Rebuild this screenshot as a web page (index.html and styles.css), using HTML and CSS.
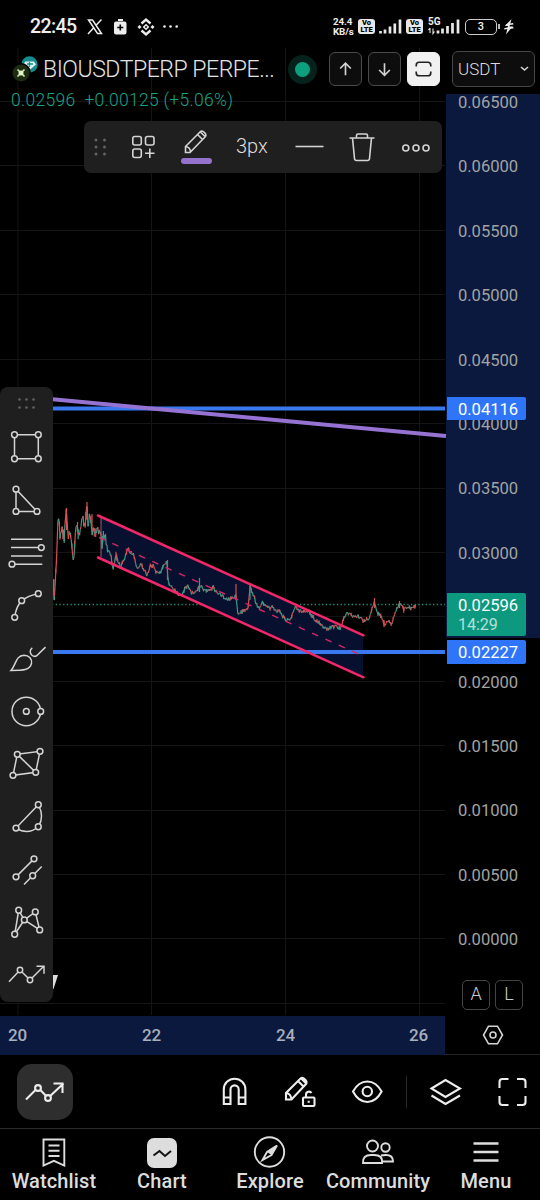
FILE: index.html
```html
<!DOCTYPE html>
<html lang="en">
<head>
<meta charset="utf-8">
<title>BIOUSDTPERP chart</title>
<link rel="stylesheet" href="styles.css">
</head>
<body>
<div class="phone">
  <header class="status">
    <span class="clock">22:45</span>
    <svg class="status-left" width="96" height="24" viewBox="85 15 96 24">
      <path class="s2" d="M88.5 20h4l9 13.500h-4zM101.500 19.500l-5.700 6M93.500 28l-5.500 6"/>
      <path class="solid" d="M118 19h5v2h-5zM116 21.500h8.500a2 2 0 0 1 2 2v9a2 2 0 0 1-2 2H116a2 2 0 0 1-2-2v-9a2 2 0 0 1 2-2z"/>
      <path class="cut" d="M120.300 24.500v6M117.300 27.500h6"/>
      <path class="s25" d="M141.500 23.500l4.500-4 4.500 4M141.500 30.500l4.500 4 4.500-4"/>
      <path class="solid" d="M146 23.700l3.300 3.300-3.300 3.300-3.300-3.300zM139.500 25l2 2-2 2-2-2zM152.500 25l2 2-2 2-2-2z"/>
      <path class="cut1" d="M146 25.800l1.200 1.200-1.200 1.200-1.200-1.200z"/>
      <circle class="solid" cx="164.500" cy="26.500" r="1.300"/><circle class="solid" cx="170.500" cy="26.500" r="1.300"/><circle class="solid" cx="176.700" cy="26.500" r="1.300"/>
    </svg>
    <div class="status-right">
      <span class="speed">24.4<br>KB/s</span>
      <span class="volte">Vo<br>LTE</span>
      <svg class="bars" width="23" height="16" viewBox="0 0 23 16"><path d="M1.500 12v2.500M6 10.500v4M11 7.500v7M15.800 4.500v10M21 .500v14"/></svg>
      <span class="volte">Vo<br>LTE</span>
      <div class="cell"><span class="g5">5G</span>
        <svg class="bars" width="32" height="16" viewBox="0 0 32 16"><path class="thin" d="M2 9v5M.500 11L2 9M5 9.500v5l1.500-2"/><path d="M10 11.500v3M14.500 9.500v5M19.500 7v7.500M24.500 4v10.500M30 .500v14"/></svg>
      </div>
      <span class="battery">3</span>
      <svg width="10" height="16" viewBox="0 0 10 16"><path class="solid" d="M7.500 0L1 7h3L2 15.500l6.500-8H5.500z"/><path class="solid" d="M0 10.500l9.500-1-.5-2L.5 9zM1 6.500l8.500-1-.5-1.500-6.500 1z"/></svg>
    </div>
  </header>

  <main class="workspace">
    <svg class="plot" width="446" height="967" viewBox="0 48 446 967">
      <g id="grid" class="grid"></g>
      <path class="last-price" d="M52 604.500H445"/>
      <path class="zone" d="M101 517L363 635V677L101 559z"/>
      <g id="candles" class="candles"></g>
      <path class="level" d="M50 408.500H445M50 652H445"/>
      <path class="trend" d="M50 399L446 436"/>
      <path class="channel" d="M98 515.500L363.500 635.300M98 557.500L363.500 677.300"/>
      <path class="median" d="M99 537.500L363 656"/>
      <path class="channel-edge" d="M101 518V557"/>
      <path class="mark" d="M52 975h6l-4.500 14H52z"/>
    </svg>

    <aside class="scale">
      <div class="range"></div>
      <ol class="prices">
        <li>0.06500</li><li>0.06000</li><li>0.05500</li><li>0.05000</li><li>0.04500</li><li>0.04000</li><li>0.03500</li>
        <li>0.03000</li><li></li><li>0.02000</li><li>0.01500</li><li>0.01000</li><li>0.00500</li><li>0.00000</li>
      </ol>
      <span class="tag tag-upper">0.04116</span>
      <span class="tag tag-last">0.02596<small>14:29</small></span>
      <span class="tag tag-lower">0.02227</span>
      <div class="modes"><button>A</button><button>L</button></div>
    </aside>

    <div class="dates"><span>20</span><span>22</span><span>24</span><span>26</span></div>
    <div class="axis-settings">
      <svg width="22" height="20" viewBox="0 0 22 20"><path d="M6.500 1.200h9l5 8.800-5 8.800h-9L1.500 10z"/><circle cx="11" cy="10" r="3"/></svg>
    </div>

    <section class="symbol">
      <div class="headline">
        <svg class="coins" width="27" height="26" viewBox="12 56 27 26">
          <circle cx="29.500" cy="65.500" r="8.200" fill="#148c90"/><path d="M25 62.500h9l2 3-6.500 5.500-6-5z" fill="#e0f2f0"/><path d="M27 65h6M29.500 63v5" stroke="#148c90" stroke-width="1.300"/>
          <circle cx="21" cy="74" r="10" fill="#000"/><circle cx="21" cy="74" r="8.500" fill="#1d2b12"/>
          <path d="M17.500 70.500l7 7M24.500 70.500l-7 7" stroke="#d6edb2" stroke-width="1.600"/><circle cx="21" cy="74" r="2.500" fill="#e3f5c4"/>
        </svg>
        <h1>BIOUSDTPERP PERPE...</h1>
        <i class="live"></i>
        <button class="key"><svg width="32" height="32" viewBox="0 0 32 32"><path d="M16 22.500V10M10.500 15.500L16 10l5.500 5.500"/></svg></button>
        <button class="key"><svg width="32" height="32" viewBox="0 0 32 32"><path d="M16 10v12.500M10.500 17L16 22.500l5.500-5.500"/></svg></button>
        <button class="key key-on"><svg width="32" height="32" viewBox="0 0 32 32"><path d="M8.500 13.500V12a3 3 0 0 1 3-3h9a3 3 0 0 1 3 3v1.500M8.500 18.500V20a3 3 0 0 0 3 3h9a3 3 0 0 0 3-3v-1.500"/></svg></button>
        <button class="currency">USDT<svg width="9" height="6" viewBox="0 0 9 6"><path d="M1 1l3.500 3L8 1"/></svg></button>
      </div>
      <p class="quote"><span>0.02596</span><span>+0.00125 (+5.06%)</span></p>
    </section>

    <div class="float-tools">
      <svg width="358" height="52" viewBox="84 120 358 52">
        <g class="dots"><circle cx="96" cy="139" r="1.500"/><circle cx="104.500" cy="139" r="1.500"/><circle cx="96" cy="146" r="1.500"/><circle cx="104.500" cy="146" r="1.500"/><circle cx="96" cy="153" r="1.500"/><circle cx="104.500" cy="153" r="1.500"/></g>
        <rect x="132.800" y="135.500" width="8.500" height="8.500" rx="2"/><rect x="145.500" y="135.500" width="8.500" height="8.500" rx="2"/><rect x="132.800" y="148" width="8.500" height="8.500" rx="2"/><path d="M149.800 147.500v9.500M145 152.300h9.500"/>
        <path d="M185.500 151.500v-6L200 131q2-2 4.500.5t.5 4.500l-15 15.500zM185.500 145.500q5 .5 5 6M197.500 133.500l5.300 5.300M200.200 130.800l5 5"/>
        <rect class="swatch" x="181" y="157" width="31" height="6" rx="3"/>
        <path d="M295.500 145.500h28"/>
        <path d="M349.500 137h25M356.500 137v-2.500q0-1.500 1.500-1.500h8q1.500 0 1.500 1.500v2.500M352.500 137l2 20.500q.2 2 2 2h11q1.800 0 2-2l2-20.500"/>
        <circle cx="405.800" cy="147" r="3"/><circle cx="416" cy="147" r="3"/><circle cx="426" cy="147" r="3"/>
      </svg>
      <span class="width-label">3px</span>
    </div>

    <nav class="drawing">
      <svg class="grip" width="52" height="33" viewBox="0 0 52 33"><circle cx="19.500" cy="12.500" r="1.300"/><circle cx="26.500" cy="12.500" r="1.300"/><circle cx="33.500" cy="12.500" r="1.300"/><circle cx="19.500" cy="20.500" r="1.300"/><circle cx="26.500" cy="20.500" r="1.300"/><circle cx="33.500" cy="20.500" r="1.300"/></svg>
      <svg viewBox="0 0 52 52"><path d="M14.500 14.300h23.800v24H14.500z"/><circle cx="14.500" cy="14.300" r="2.900"/><circle cx="38.300" cy="14.300" r="2.900"/><circle cx="14.500" cy="38.300" r="2.900"/><circle cx="38.300" cy="38.300" r="2.900"/></svg>
      <svg viewBox="0 0 52 52"><path d="M16 15.700V38h21z"/><circle cx="16" cy="15.700" r="2.900"/><circle cx="16" cy="38" r="2.900"/><circle cx="37" cy="38" r="2.900"/></svg>
      <svg viewBox="0 0 52 52"><path d="M11 12.800h31.300M11 21.100h30M11 29.500h31.300M12 37.700h30.300"/><circle cx="41.300" cy="21.100" r="2.900"/><circle cx="12" cy="37.700" r="2.900"/></svg>
      <svg viewBox="0 0 52 52"><path d="M14.700 37.900Q16 27 21.700 21.200 28 16 38.300 14.200"/><circle cx="14.700" cy="37.900" r="2.900"/><circle cx="21.700" cy="21.200" r="2.900"/><circle cx="38.300" cy="14.200" r="2.900"/></svg>
      <svg viewBox="0 0 52 52"><path d="M11 38C16 33 15.500 23 24 22.700c5 0 8.500 4.300 7.500 8.300C30 38 23 38 11 38zM32.300 15.300c-3 2-2.500 5.500-.3 7.500 2.500 2 4.500 1 6-.8l7.500-7.300"/></svg>
      <svg viewBox="0 0 52 52"><circle cx="26.300" cy="26" r="14.300"/><circle cx="26.300" cy="26" r="2.900"/><circle cx="40.700" cy="26" r="2.900"/></svg>
      <svg viewBox="0 0 52 52"><path d="M17.300 16.900L40 13.900l-4.300 21-22.700 3zl18.400 18"/><circle cx="17.300" cy="16.900" r="2.900"/><circle cx="40" cy="13.900" r="2.900"/><circle cx="35.700" cy="34.900" r="2.900"/><circle cx="13" cy="37.900" r="2.900"/></svg>
      <svg viewBox="0 0 52 52"><path d="M38.300 14.300L16 37.600q12 7.500 22.300-1.300 6.500-10 0-22z"/><circle cx="38.300" cy="14.300" r="2.900"/><circle cx="16" cy="37.600" r="2.900"/><circle cx="38.300" cy="36.300" r="2.900"/></svg>
      <svg viewBox="0 0 52 52"><path d="M16 33.400l18-18M24 41.100l17.700-18"/><circle cx="16" cy="33.400" r="2.900"/><circle cx="34" cy="15.400" r="2.900"/><circle cx="32.700" cy="32.300" r="2.900"/></svg>
      <svg viewBox="0 0 52 52"><path d="M14.700 37.800L18.700 13.800 24.300 23.500zM24.300 23.500L35.300 15.500 39.700 33.500z"/><circle cx="14.700" cy="37.800" r="2.900"/><circle cx="18.700" cy="13.800" r="2.900"/><circle cx="24.300" cy="23.500" r="2.900"/><circle cx="35.300" cy="15.500" r="2.900"/><circle cx="39.700" cy="33.500" r="2.900"/></svg>
      <svg viewBox="0 0 52 52"><path d="M9 32.300l11-11.700 10 10 14-14M36.500 16.800H44v7.500"/><circle cx="20" cy="20.600" r="2.700"/><circle cx="30" cy="30.600" r="2.700"/></svg>
    </nav>
  </main>

  <div class="toolbar">
    <button class="tool-active"><svg width="56" height="56" viewBox="17 1064 56 56"><path d="M26 1099.500l12-12 10 10.500 15.500-14.500M53.500 1083.500h9v9.500"/><circle cx="38" cy="1088" r="2.900"/><circle cx="48" cy="1098" r="2.900"/></svg></button>
    <svg class="magnet" width="26" height="30" viewBox="222 1077 26 30"><path d="M223.800 1104v-14.500a10.800 10.800 0 0 1 21.600 0V1104h-6.700v-14.500a4.100 4.100 0 0 0-8.200 0V1104zM223.800 1097.500h6.700M238.700 1097.500h6.700"/></svg>
    <svg class="pencil" width="32" height="32" viewBox="284 1076 32 32"><path d="M286 1099.500v-6.500l14.500-14.500q2-1.500 4.500 1t1 4.500L291.500 1099.500zM286 1093q5 .5 5.500 6.500M298 1081l5.500 5.500M301 1078.300l5 5"/><rect x="303" y="1097.500" width="11.500" height="8.500" rx="1"/><path d="M306 1097v-2.500a3 3 0 0 1 5.500-1.500M308.700 1100.700v2"/></svg>
    <svg class="eye" width="32" height="26" viewBox="351 1079 32 26"><path d="M353 1091.500q5.500-10 14.300-10t14.300 10q-5.500 10.500-14.300 10.500t-14.300-10.500z"/><circle cx="367.300" cy="1091.500" r="4.700"/></svg>
    <i class="rule"></i>
    <svg class="layers" width="32" height="30" viewBox="429 1077 32 30"><path d="M431.500 1088.500l14-8.500 14.500 8.500-14.500 8.500zM431.500 1095.500l14 8.500 14.500-8.500"/></svg>
    <svg class="expand" width="30" height="30" viewBox="497 1077 30 30"><path d="M499.500 1088v-6q0-3 3-3h6M517 1079h5.500q3 0 3 3v6M525.500 1096v6q0 3-3 3H517M508.500 1105h-6q-3 0-3-3v-6"/></svg>
  </div>

  <footer class="tabs">
    <a><svg viewBox="0 0 32 32"><path d="M5.500 2.500h20.800v26l-10.400-4.700-10.400 4.700zM10.500 8.500h11M10.500 13.700h11M10.500 19h11"/></svg>Watchlist</a>
    <a><svg viewBox="0 0 32 32"><rect class="fill" x="1" y="1" width="30" height="30" rx="7"/><path class="dark" d="M7.500 18.500l6-4.500 5.500 5 6-5"/></svg>Chart</a>
    <a><svg viewBox="0 0 32 32"><circle cx="15.500" cy="15" r="14.700"/><path d="M23 8.500l-10 6.500-4.500 8 9-5z"/><path class="fill" d="M23 8.500l-10 6.500 4.500 3z"/></svg>Explore</a>
    <a><svg viewBox="0 0 32 32"><circle cx="10.500" cy="9" r="5.500"/><circle cx="23.500" cy="10.500" r="4.200"/><path d="M1 26q-.500-8 8-8h3q9 0 8 8zM19 18.500q2-.500 5-.500 7 0 7 6.500H20.500"/></svg>Community</a>
    <a><svg viewBox="0 0 32 32"><path class="menu" d="M3.500 6.500h25M3.500 15h25M3.500 23.500h25"/></svg>Menu</a>
  </footer>
</div>
<script src="chart.js"></script>
</body>
</html>
```
FILE: styles.css
```css
* { box-sizing: border-box; }
body { margin: 0; background: #000; color: #ddd; font-family: Roboto, "Noto Sans", sans-serif; }
button { margin: 0; padding: 0; border: 0; background: none; color: inherit; font: inherit; }
svg { display: block; flex: none; fill: none; stroke: #d4d4d4; stroke-width: 1.6; overflow: visible; }
.phone { width: 540px; height: 1200px; display: flex; flex-direction: column; overflow: hidden; }

.status { height: 48px; padding: 5px 26px 0 30px; display: flex; align-items: center; flex: none; }
.clock { width: 55px; font-size: 19.5px; font-weight: 500; color: #eee; letter-spacing: -.6px; }
.status svg { stroke: none; }
.solid { fill: #ededed; stroke: none; }
.status .s2 { stroke: #ededed; stroke-width: 1.5; }
.status .s25 { stroke: #ededed; stroke-width: 2.4; }
.status .cut { stroke: #000; stroke-width: 1.6; }
.cut1 { fill: #000; }
.status-right { margin-left: auto; display: flex; align-items: center; color: #eee; }
.speed { width: 25px; font-size: 9.8px; line-height: 9.5px; font-weight: 700; white-space: nowrap; letter-spacing: -.15px; }
.volte { width: 17px; height: 15px; margin-right: 4px; padding: 1px 0; border-radius: 3px; background: #e8e8e8; color: #000; font-size: 7.5px; line-height: 6.500px; font-weight: 900; text-align: center; }
.status .bars { stroke: #e8e8e8; stroke-width: 2.7; }
.status-right > .bars { margin-right: 4px; }
.status .bars .thin { stroke-width: 1.1; }
.cell { position: relative; margin: 0 5px 0 1px; }
.g5 { position: absolute; left: 0; top: -2px; font-size: 10px; line-height: 10px; font-weight: 700; }
.battery { position: relative; width: 32px; height: 16px; margin-right: 7px; border: 1.5px solid #ccc; border-radius: 5px; font-size: 11px; line-height: 13.500px; font-weight: 500; text-align: center; }
.battery::after { content: ""; position: absolute; right: -4px; top: 4px; width: 2px; height: 5px; background: #bbb; }

.workspace { position: relative; height: 1007px; flex: none; display: grid; grid-template-columns: 446px 94px; grid-template-rows: 967px 40px; border-bottom: 1px solid #242424; }
.grid { stroke: #151515; stroke-width: 1; }
.last-price { stroke: #15977d; stroke-width: 1.3; stroke-dasharray: 1.3 2.4; }
.level { stroke: #3978ef; stroke-width: 4; }
.trend { stroke: #9673d2; stroke-width: 4; }
.zone { fill: #07112f; stroke: none; }
.channel { stroke: #f12769; stroke-width: 2.5; stroke-linecap: round; }
.median { stroke: #d42867; stroke-width: 1.4; stroke-dasharray: 6.600 8; }
.channel-edge { stroke: #9c5f84; stroke-width: 1; }
.candles { stroke-width: 1.2; }
.up { stroke: #3f9a86; }
.down { stroke: #d65155; }
.mark { fill: #ddd; stroke: none; }

.scale { position: relative; padding-top: 22px; color: #a3a3a3; font-size: 16.600px; }
.range { position: absolute; z-index: -1; left: 0; right: 0; top: 46px; height: 544px; background: #0a193d; }
.prices { margin: 0; padding: 0; list-style: none; letter-spacing: -.05px; }
.prices li { height: 64.420px; padding-left: 12px; line-height: 65.420px; }
.tag { position: absolute; left: 1px; width: 79px; height: 23px; padding-left: 11px; border-radius: 0 2px 2px 0; background: #2f75fa; color: #fff; line-height: 25px; letter-spacing: -.05px; }
.tag-upper { top: 349px; }
.tag-last { top: 545px; height: 43px; background: #0c9980; line-height: 25px; }
.tag-last small { display: block; font-size: 16px; line-height: 16px; margin-top: -1px; color: #b5e0d8; }
.tag-lower { top: 592px; height: 24px; line-height: 26px; }
.modes { position: absolute; top: 932px; display: flex; gap: 5px; padding-left: 16px; }
.modes button { width: 28px; height: 30px; border: 1px solid #444; border-radius: 5px; color: #ccc; font-size: 18px; font-weight: 300; line-height: 26px; padding-bottom: 2px; }
.dates { width: 445px; background: #0a193d; display: grid; grid-template-columns: 134px 134px 133px 44px; height: 39px; margin-top: 1px; line-height: 39px; font-size: 17px; font-weight: 500; color: #a9afbd; }
.dates span { padding-left: 8px; letter-spacing: -.1px; }
.axis-settings { display: grid; place-items: center; }

.symbol { position: absolute; left: 0; top: 0; width: 540px; }
.headline { display: flex; align-items: center; height: 42px; padding-left: 12px; }
.coins { stroke: none; margin-top: -2px; }
h1 { width: 240px; margin: 0 5px 0 4px; font-size: 23px; font-weight: 300; color: #e4e4e4; white-space: nowrap; letter-spacing: -.45px; }
.live { width: 29px; height: 29px; margin-right: 12px; border: 7.500px solid #06221c; border-radius: 50%; background: #0ca07f; }
.key { width: 33px; height: 34px; margin-right: 6px; border: 1px solid #4b4b4b; border-radius: 6px; background: #0d0d0d; }
.key svg { width: 31px; stroke-width: 1.700; }
.key-on { margin-right: 12px; background: #f1f1f1; border-color: #f1f1f1; }
.key-on svg { stroke: #222; }
.currency { display: flex; align-items: center; justify-content: space-between; width: 83px; height: 36px; padding: 0 5px; border: 1.500px solid #464646; border-radius: 6px; background: #0d0d0d; font-size: 17px; font-weight: 300; color: #ddd; }
.quote { display: flex; gap: 9px; margin: -1px 0 0; padding-left: 11px; font-size: 17.500px; font-weight: 300; line-height: 22px; letter-spacing: .28px; color: #1aa285; }

.float-tools { position: absolute; left: 84px; top: 73px; width: 358px; height: 52px; border-radius: 7px; background: #1f1f1f; }
.dots circle, .grip circle { fill: #626262; stroke: none; }
.swatch { fill: #9573cd; stroke: none; }
.width-label { position: absolute; left: 152px; top: 13px; font-size: 20px; line-height: 24px; font-weight: 300; color: #ddd; }
.drawing { position: absolute; left: 0; top: 339px; width: 53px; height: 615px; display: flex; flex-direction: column; border-radius: 8px; background: #1f1f1f; }
.drawing svg { width: 52px; height: 52.920px; stroke-width: 1.500; }
.drawing .grip { height: 33px; }
.drawing circle:not(:first-child) { fill: #1f1f1f; }
.drawing .grip circle { fill: #626262; }

.toolbar { height: 74px; flex: none; padding-left: 17px; display: flex; align-items: center; border-bottom: 1px solid #2a2a2a; }
.toolbar svg { stroke: #ededed; stroke-width: 2.100; }
.tool-active { flex: none; width: 56px; height: 56px; border-radius: 15px; background: #2e2e2e; margin-right: 149px; }
.tool-active circle { fill: #2e2e2e; }
.magnet { margin-right: 36px; }
.pencil { margin-right: 35px; }
.eye { margin-right: 23px; }
.rule { flex: none; width: 1px; height: 32px; background: #292929; margin-right: 22px; }
.layers { margin-right: 36px; }

.tabs { height: 71px; padding-top: 8px; display: grid; grid-template-columns: repeat(5, 108px); }
.tabs a { display: flex; flex-direction: column; align-items: center; font-size: 20px; line-height: 24px; font-weight: 500; letter-spacing: .13px; color: #ddd; }
.tabs svg { width: 32px; height: 32px; stroke: #ddd; stroke-width: 1.900; }
.tabs .fill { fill: #ddd; stroke: none; }
.tabs .dark { stroke: #111; stroke-width: 2; }
.tabs .menu { stroke-width: 2.400; }
```
FILE: chart.js
```js
const NS = 'http://www.w3.org/2000/svg';
function draw(parent, d, cls) {
  const p = document.createElementNS(NS, 'path');
  p.setAttribute('d', d);
  if (cls) p.setAttribute('class', cls);
  parent.appendChild(p);
}

const grid = document.getElementById('grid');
[18, 151.5, 285.5, 419.5].forEach(x => draw(grid, `M${x} 48V1015`));
for (let i = 0; i < 15; i++) draw(grid, `M0 ${Math.round(101 + i * 64.42) + 0.5}H445`);

const points = [
  [53,600],[54,578],[54.5,598],[55.5,575],[57,550],[57.5,528],[59,513],[60,535],[62,530],[64,540],[65,525],[66.5,509],[68,535],[70,535],[71.5,545],[73,558],[74.5,550],[76,525],[79,536],[81,525],[83,520],[85,525],[86.5,503],[88,522],[90,515],[92,533],[95,530],[97,533],[99,528],[101,530],[101.5,548],[103,537],[106,540],[108,552],[110,550],[113,565],[116,555],[119,568],[123,560],[125,557],[128,548],[130,552],[133,553],[137,568],[141,565],[147,575],[150,566],[154,566],[156,572],[160,573],[164,565],[167,562],[168,582],[171,586],[175,590],[180,596],[184,590],[188,586],[192,593],[197,590],[200,586],[205,590],[208,590],[213,587],[217,593],[222,596],[225,598],[230,600],[233,597],[236,596],[238,614],[243,611],[248,611],[250,585],[252,592],[255,600],[258,608],[263,603],[267,607],[272,608],[277,611],[281,613],[286,620],[291,619],[295,606],[298,610],[303,611],[308,610],[313,618],[318,621],[323,627],[328,629],[333,626],[340,628],[344,618],[347,613],[350,615],[354,617],[358,616],[365,621],[369,619],[372,607],[374,602],[377,612],[382,617],[385,624],[388,621],[392,623],[396,610],[400,603],[404,610],[408,606],[410,608],[413,609],[416,604]
];
const wicks = [[66.5,508,530],[87,502,520],[92,514,531],[167.5,560,580],[199.5,578,592],[236,584,600],[250,583,600],[374.5,598,608],[384,620,627],[399.5,601,608]];

// Deterministic jitter keeps the candles identical on every load.
let seed = 7;
const rnd = () => (seed = (seed * 16807) % 2147483647) / 2147483647;
const candles = document.getElementById('candles');
let px = points[0][0], py = points[0][1], k = 1;
for (let x = px + 0.7; x <= 416; x += 0.7) {
  while (points[k][0] < x) k++;
  const a = points[k - 1], b = points[k];
  const early = x < 125;
  const y = a[1] + (b[1] - a[1]) * (x - a[0]) / (b[0] - a[0]) + (rnd() - 0.5) * (early ? 9 : 4);
  const cls = rnd() < 0.5 === y < py ? 'up' : 'down';
  draw(candles, `M${px.toFixed(1)} ${py.toFixed(1)}L${x.toFixed(1)} ${y.toFixed(1)}`, cls);
  if (rnd() < 0.4) {
    const reach = rnd() * (early ? 11 : 4);
    draw(candles, `M${x.toFixed(1)} ${(y - reach / 2).toFixed(1)}v${reach.toFixed(1)}`, cls);
  }
  px = x; py = y;
}
wicks.forEach(([x, top, bottom], i) => draw(candles, `M${x} ${top}V${bottom}`, i === 4 || i === 6 ? 'up' : 'down'));
```
